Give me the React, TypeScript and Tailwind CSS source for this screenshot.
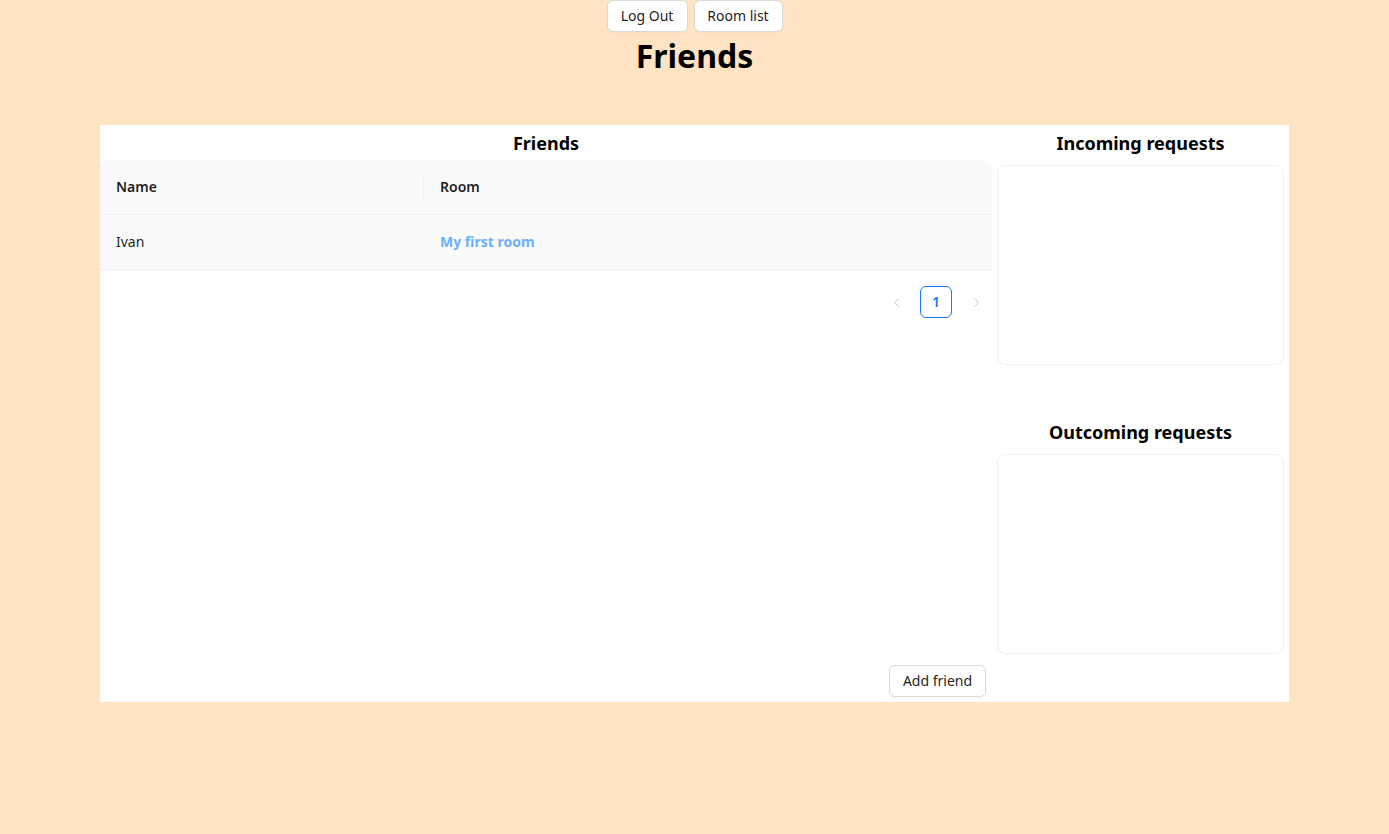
import { ChevronLeft, ChevronRight } from "lucide-react";

const friends = [{ name: "Ivan", room: "My first room" }];

function Button({ children, className = "" }: { children: React.ReactNode; className?: string }) {
    return (
        <button
            className={`h-8 rounded-md border border-[#d9d9d9] bg-white text-sm text-black/90 shadow-[0_2px_0_rgba(0,0,0,0.02)] ${className}`}
        >
            {children}
        </button>
    );
}

function RequestBox({ title, className = "" }: { title: string; className?: string }) {
    return (
        <div className={className}>
            <h3 className="mb-[9px] text-center text-lg leading-[26px] font-bold text-black">{title}</h3>
            <div className="h-[200px] rounded-lg border border-[#f0f0f0] bg-white" />
        </div>
    );
}

export default function App() {
    return (
        <div
            className="min-h-screen bg-[#ffe4c4] text-black/90"
            style={{ fontFamily: '"Noto Sans", "Open Sans", sans-serif' }}
        >
            <div className="flex justify-center gap-[6px]">
                <Button className="w-[81px]">Log Out</Button>
                <Button className="w-[89px]">Room list</Button>
            </div>

            <h1 className="mt-[4px] text-center text-[32px] leading-[40px] font-bold text-black">Friends</h1>

            <div className="mx-[100px] mt-[49px] bg-white pr-[5px] pb-[5px]">
                <div className="flex gap-[5px]">
                    {/* friends table */}
                    <div className="flex-1">
                        <h3 className="mt-[5px] mb-[4px] text-center text-lg leading-[26px] font-bold text-black">
                            Friends
                        </h3>

                        <div className="overflow-hidden rounded-t-lg">
                            <div className="flex h-[55px] items-center border-b border-[#f0f0f0] bg-[#fafafa] text-sm font-semibold">
                                <div className="relative w-[324px] px-4">
                                    Name
                                    <span className="absolute top-1/2 right-0 h-[22px] w-px -translate-y-1/2 bg-[#f0f0f0]" />
                                </div>
                                <div className="flex-1 px-4">Room</div>
                            </div>

                            {friends.map((f) => (
                                <div
                                    key={f.name}
                                    className="flex h-[55px] items-center border-b border-[#f0f0f0] bg-[#fafafa] text-sm"
                                >
                                    <div className="w-[324px] px-4">{f.name}</div>
                                    <div className="flex-1 px-4">
                                        <a className="cursor-pointer font-bold text-[#69b1ff]">{f.room}</a>
                                    </div>
                                </div>
                            ))}
                        </div>

                        <div className="my-4 flex justify-end gap-2">
                            <div className="flex h-8 w-8 items-center justify-center text-black/25">
                                <ChevronLeft size={15} strokeWidth={1.5} />
                            </div>
                            <div className="flex h-8 w-8 items-center justify-center rounded-md border border-[#1677ff] text-sm font-semibold text-[#1677ff]">
                                1
                            </div>
                            <div className="flex h-8 w-8 items-center justify-center text-black/25">
                                <ChevronRight size={15} strokeWidth={1.5} />
                            </div>
                        </div>
                    </div>

                    {/* requests */}
                    <div className="w-[287px]">
                        <RequestBox title="Incoming requests" className="mt-[5px]" />
                        <RequestBox title="Outcoming requests" className="mt-[54px]" />
                    </div>
                </div>

                <div className="mt-[11px] flex w-[892px] justify-end pr-[6px]">
                    <Button className="w-[97px]">Add friend</Button>
                </div>
            </div>
        </div>
    );
}
